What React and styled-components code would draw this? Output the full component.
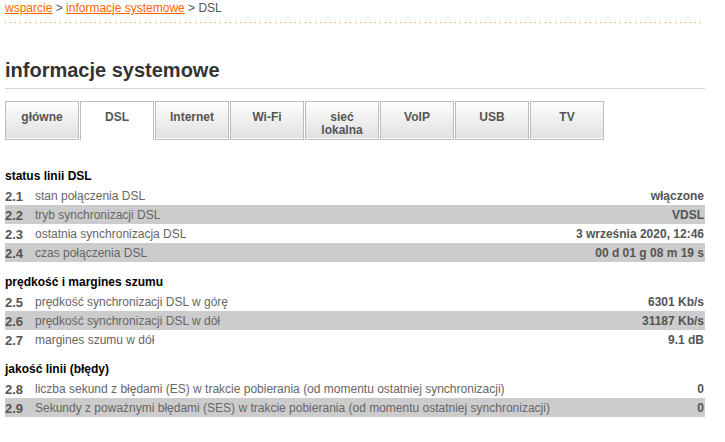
import React from 'react';
import styled, { createGlobalStyle } from 'styled-components';

const tabs = ['główne', 'DSL', 'Internet', 'Wi-Fi', 'sieć\nlokalna', 'VoIP', 'USB', 'TV'];

const sections = [
  {
    title: 'status linii DSL',
    rows: [
      ['2.1', 'stan połączenia DSL', 'włączone'],
      ['2.2', 'tryb synchronizacji DSL', 'VDSL'],
      ['2.3', 'ostatnia synchronizacja DSL', '3 września 2020, 12:46'],
      ['2.4', 'czas połączenia DSL', '00 d 01 g 08 m 19 s'],
    ],
  },
  {
    title: 'prędkość i margines szumu',
    rows: [
      ['2.5', 'prędkość synchronizacji DSL w górę', '6301 Kb/s'],
      ['2.6', 'prędkość synchronizacji DSL w dół', '31187 Kb/s'],
      ['2.7', 'margines szumu w dół', '9.1 dB'],
    ],
  },
  {
    title: 'jakość linii (błędy)',
    rows: [
      ['2.8', 'liczba sekund z błędami (ES) w trakcie pobierania (od momentu ostatniej synchronizacji)', '0'],
      ['2.9', 'Sekundy z poważnymi błędami (SES) w trakcie pobierania (od momentu ostatniej synchronizacji)', '0'],
    ],
  },
];

const App = () => (
  <>
    <GlobalStyle />
    <Page>
      <Breadcrumb>
        <Crumb href="#">wsparcie</Crumb> &gt; <Crumb href="#">informacje systemowe</Crumb> &gt; DSL
      </Breadcrumb>
      <Dots />
      <Title>informacje systemowe</Title>
      <Tabs>
        {tabs.map((t) => (
          <Tab key={t} $active={t === 'DSL'}>
            {t}
          </Tab>
        ))}
      </Tabs>
      {sections.map((s) => (
        <Section key={s.title}>
          <SectionTitle>{s.title}</SectionTitle>
          {s.rows.map(([num, label, value], i) => (
            <Row key={num} $striped={i % 2 === 1}>
              <Num>{num}</Num>
              <Label>{label}</Label>
              <Value>{value}</Value>
            </Row>
          ))}
        </Section>
      ))}
    </Page>
  </>
);

export default App;

const GlobalStyle = createGlobalStyle`
  body {
    margin: 0;
    background: #fff;
    font-family: "Liberation Sans", Arial, sans-serif;
    font-size: 12px;
  }
`;

const Page = styled.div`
  width: 700px;
  padding: 0 5px;
`;

const Breadcrumb = styled.div`
  height: 16px;
  line-height: 16px;
  font-size: 12px;
  color: #555;
`;

const Crumb = styled.a`
  color: #ff6600;
  text-decoration: underline;
`;

const Dots = styled.div`
  margin-top: 6px;
  height: 1px;
  background: repeating-linear-gradient(to right, #ff8c3a 0 1px, transparent 1px 5px);
`;

const Title = styled.h1`
  margin: 35px 0 0;
  padding-bottom: 6px;
  line-height: 24px;
  font-size: 20px;
  font-weight: bold;
  color: #333;
  border-bottom: 1px solid #d4d4d4;
`;

const Tabs = styled.div`
  display: flex;
  gap: 1px;
  margin-top: 12px;
  margin-bottom: 27px;
`;

const Tab = styled.div`
  box-sizing: border-box;
  width: 74px;
  height: ${(p) => (p.$active ? '40px' : '39px')};
  padding-top: 9px;
  border: 1px solid #bdbdbd;
  border-bottom-color: ${(p) => (p.$active ? '#fff' : '#bdbdbd')};
  background: ${(p) => (p.$active ? '#fff' : 'linear-gradient(#fdfdfd, #e0e0e0)')};
  box-shadow: ${(p) => (p.$active ? 'none' : 'inset 0 -1px 0 #fff')};
  color: #555;
  font-weight: bold;
  font-size: 12px;
  line-height: 13px;
  text-align: center;
  white-space: pre-line;
`;

const Section = styled.div`
  margin-top: 12px;
`;

const SectionTitle = styled.div`
  line-height: 16px;
  margin-bottom: 2px;
  font-weight: bold;
  font-size: 12px;
  color: #000;
`;

const Row = styled.div`
  display: flex;
  align-items: center;
  height: 19px;
  background: ${(p) => (p.$striped ? '#cccccc' : 'transparent')};
`;

const Num = styled.span`
  width: 30px;
  flex-shrink: 0;
  font-weight: bold;
  font-size: 13px;
  color: #555;
  padding-top: 1px;
`;

const Label = styled.span`
  flex: 1;
  color: #666;
  font-size: 12px;
`;

const Value = styled.span`
  padding-right: 1px;
  font-weight: bold;
  font-size: 12px;
  color: #555;
`;
